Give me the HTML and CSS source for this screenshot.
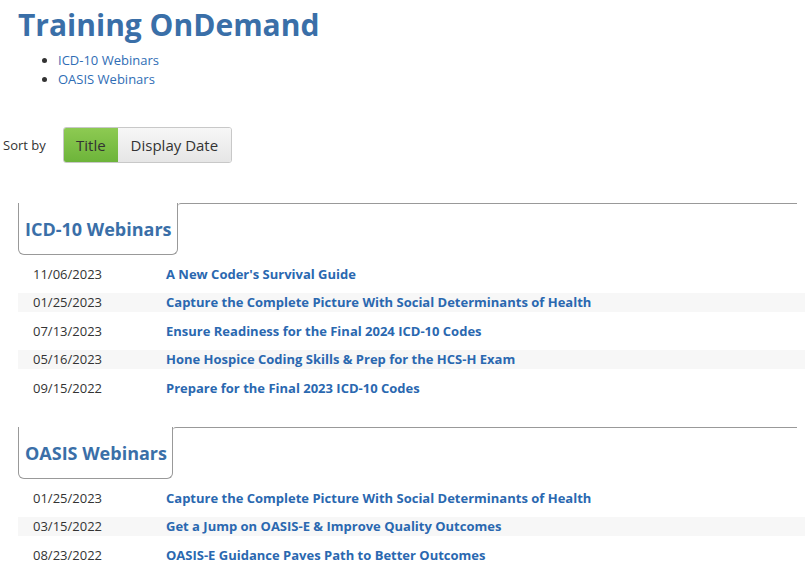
FILE: index.html
```html
<!DOCTYPE html>
<html lang="en">
<head>
    <meta charset="UTF-8">
    <title>Training OnDemand</title>
    <link rel="stylesheet" href="styles.css">
</head>
<body>
    <h1 class="page-title">Training OnDemand</h1>
    <ul class="jump-list">
        <li><a href="#icd">ICD-10 Webinars</a></li>
        <li><a href="#oasis">OASIS Webinars</a></li>
    </ul>

    <div class="sort-bar">
        <span class="sort-label">Sort by</span>
        <div class="btn-group">
            <button class="btn active">Title</button>
            <button class="btn">Display Date</button>
        </div>
    </div>

    <!-- ICD-10 -->
    <div class="section" id="icd">
        <div class="section-head">
            <h2 class="tab">ICD-10 Webinars</h2>
            <div class="rule"></div>
        </div>
        <div class="rows">
            <div class="row"><span class="date">11/06/2023</span><a href="#">A New Coder's Survival Guide</a></div>
            <div class="row"><span class="date">01/25/2023</span><a href="#">Capture the Complete Picture With Social Determinants of Health</a></div>
            <div class="row"><span class="date">07/13/2023</span><a href="#">Ensure Readiness for the Final 2024 ICD-10 Codes</a></div>
            <div class="row"><span class="date">05/16/2023</span><a href="#">Hone Hospice Coding Skills &amp; Prep for the HCS-H Exam</a></div>
            <div class="row"><span class="date">09/15/2022</span><a href="#">Prepare for the Final 2023 ICD-10 Codes</a></div>
        </div>
    </div>

    <!-- OASIS -->
    <div class="section" id="oasis">
        <div class="section-head">
            <h2 class="tab">OASIS Webinars</h2>
            <div class="rule"></div>
        </div>
        <div class="rows">
            <div class="row"><span class="date">01/25/2023</span><a href="#">Capture the Complete Picture With Social Determinants of Health</a></div>
            <div class="row"><span class="date">03/15/2022</span><a href="#">Get a Jump on OASIS-E &amp; Improve Quality Outcomes</a></div>
            <div class="row"><span class="date">08/23/2022</span><a href="#">OASIS-E Guidance Paves Path to Better Outcomes</a></div>
        </div>
    </div>
</body>
</html>
```

FILE: styles.css
```css
body {
    margin: 0;
    font-family: 'Open Sans', sans-serif;
    font-size: 13px;
    color: #333;
    overflow: hidden;
}

a {
    color: #2a68b0;
    text-decoration: none;
}

.page-title {
    margin: 0;
    padding: 4px 0 0 18px;
    font-size: 30px;
    line-height: 42px;
    font-weight: 700;
    color: #3a6fa8;
}

.jump-list {
    margin: 5px 0 0;
    padding-left: 58px;
    line-height: 19px;
}

.jump-list a {
    color: #2f6db5;
}

/* Sort bar */
.sort-bar {
    display: flex;
    align-items: center;
    margin-top: 38px;
    padding-left: 3px;
}

.sort-label {
    width: 60px;
    font-size: 13px;
}

.btn-group {
    display: flex;
    border: 1px solid #c8c8c8;
    border-radius: 3px;
    overflow: hidden;
}

.btn {
    height: 34px;
    padding: 0 13px;
    font-family: 'Open Sans', sans-serif;
    font-size: 15px;
    color: #333;
    border: none;
    background: linear-gradient(#f7f7f7, #e6e6e6);
    cursor: pointer;
}

.btn.active {
    padding: 0 12px;
    background: linear-gradient(#8dca52, #6db43a);
    color: #333;
}

/* Sections */
.section {
    padding-left: 18px;
}

#icd {
    margin-top: 40px;
}

#oasis {
    margin-top: 30px;
}

.section-head {
    display: flex;
    margin-right: 8px;
}

.tab {
    margin: 0;
    padding: 14px 5px 13px 6px;
    font-size: 18px;
    line-height: 24px;
    font-weight: 700;
    color: #3a6fa8;
    border: 1px solid #999;
    border-top: none;
    border-radius: 0 0 6px 6px;
}

.rule {
    flex: 1;
    border-top: 1px solid #999;
    border-top-left-radius: 3px;
}

.rows {
    margin-top: 9px;
}

.row {
    display: flex;
    align-items: center;
    height: 19px;
    margin-bottom: 9.5px;
}

.row:nth-child(even) {
    background: #f7f7f7;
}

.date {
    width: 133px;
    padding-left: 15px;
}

.row a {
    font-weight: 700;
}
```
